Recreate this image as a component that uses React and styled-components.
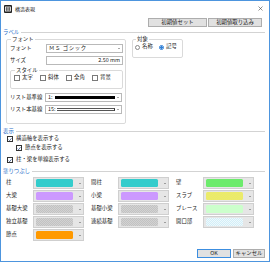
import React from 'react';
import styled, { createGlobalStyle } from 'styled-components';

const Global = createGlobalStyle`
  html, body { margin: 0; padding: 0; background: #fff; }
  body {
    font-family: "Noto Sans CJK JP", "Noto Sans", sans-serif;
    font-size: 5.4px;
    line-height: 1;
    color: #1a1a1a;
  }
  * { box-sizing: border-box; }
`;

const Window = styled.div`
  width: 270px;
  height: 262px;
  border: 1px solid #4d95de;
  background: #fff;
  display: flex;
  flex-direction: column;
`;

const TitleBar = styled.div`
  height: 15px;
  display: flex;
  align-items: center;
  gap: 3px;
  padding: 0 6px 0 3px;
`;

const Title = styled.span`
  font-size: 5px;
  color: #222;
`;

const Close = styled.svg`
  margin-left: auto;
  width: 5px;
  height: 5px;
`;

const Toolbar = styled.div`
  display: flex;
  justify-content: flex-end;
  gap: 1px;
  margin-top: 2px;
  padding-right: 7px;
`;

const Button = styled.button`
  width: ${(p) => p.w}px;
  height: 9px;
  padding: 0;
  font: inherit;
  color: #222;
  background: #e1e1e1;
  border: 1px solid ${(p) => (p.primary ? '#3c8ee0' : '#adadad')};
  display: flex;
  align-items: center;
  justify-content: center;
`;

const SectionHeader = styled.div`
  display: flex;
  align-items: center;
  gap: 2px;
  height: 7px;
  margin-top: ${(p) => p.top}px;
  padding: 0 4px 0 2px;
  color: #2a6fc9;
  &::after {
    content: '';
    flex: 1;
    height: 1px;
    background: #d3d3d3;
  }
`;

const LabelBody = styled.div`
  display: flex;
  align-items: flex-start;
  gap: 6px;
  padding-left: 5px;
`;

const Group = styled.fieldset`
  margin: 0;
  width: ${(p) => p.w}px;
  height: ${(p) => p.h}px;
  border: 1px solid #dadada;
  border-radius: 2px;
  padding: ${(p) => p.pad};
  display: flex;
  flex-direction: column;
  gap: ${(p) => p.gap || 0}px;
`;

const Legend = styled.legend`
  padding: 0 1px;
  margin-left: 1px;
  line-height: 7px;
  color: #222;
`;

const FieldRow = styled.div`
  display: flex;
  align-items: center;
  height: 9px;
  margin-top: ${(p) => p.top || 0}px;
`;

const FieldLabel = styled.span`
  width: ${(p) => p.w || 36}px;
  flex: none;
`;

const Select = styled.div`
  width: 77px;
  height: 9px;
  border: 1px solid #b9b9b9;
  background: #fff;
  display: flex;
  align-items: center;
  gap: 2px;
  padding: 0 2px;
`;

const SelectText = styled.span`
  flex: ${(p) => (p.grow ? 1 : 'none')};
  text-align: ${(p) => (p.right ? 'right' : 'left')};
  letter-spacing: ${(p) => (p.wide ? '0.6px' : '0')};
`;

const Arrow = styled.span`
  margin-left: auto;
  width: 0;
  height: 0;
  border-left: 1.5px solid transparent;
  border-right: 1.5px solid transparent;
  border-top: 1.5px solid #555;
`;

const ThickLine = styled.span`
  flex: 1;
  height: 2.5px;
  background: #000;
`;

const ThinLine = styled.span`
  flex: 1;
  height: 3px;
  border-top: 1px solid #555;
  border-bottom: 1px solid #555;
  border-right: 1px solid #333;
`;

const CheckRow = styled.div`
  display: flex;
  align-items: center;
`;

const CheckItem = styled.label`
  display: flex;
  align-items: center;
  gap: ${(p) => p.gap || 2}px;
  width: ${(p) => (p.w ? p.w + 'px' : 'auto')};
  height: 8px;
  padding-left: ${(p) => p.indent || 0}px;
  margin-top: ${(p) => p.top || 0}px;
`;

const Box = styled.span`
  width: 6px;
  height: 6px;
  flex: none;
  border: 1px solid ${(p) => (p.on ? '#333' : '#7a7a7a')};
  background: #fff;
  display: flex;
  align-items: center;
  justify-content: center;
`;

const Radio = styled.span`
  width: 5px;
  height: 5px;
  flex: none;
  border-radius: 50%;
  border: 1px solid ${(p) => (p.on ? '#2f7fd6' : '#888')};
  background: ${(p) => (p.on ? 'radial-gradient(circle, #2f7fd6 55%, #fff 60%)' : '#fff')};
`;

const DisplayBody = styled.div`
  display: flex;
  flex-direction: column;
  padding-left: 6px;
`;

const FillGrid = styled.div`
  display: grid;
  grid-template-columns: repeat(3, 85px);
  row-gap: 1px;
  margin-top: 2px;
  padding-left: 5px;
`;

const FillItem = styled.div`
  display: flex;
  align-items: center;
  height: 12px;
`;

const FillLabel = styled.span`
  width: 27px;
  flex: none;
`;

const ColorCombo = styled.div`
  width: 51px;
  height: 12px;
  border: 1px solid #cfcfcf;
  background: #e6e6e6;
  display: flex;
  align-items: center;
  padding: 0 2px;
  gap: 3px;
`;

const Swatch = styled.span`
  width: 37px;
  height: 8px;
  border-radius: 1.5px;
  background: ${(p) => p.fill};
  background-size: 2px 2px;
`;

const Footer = styled.div`
  margin-top: auto;
  display: flex;
  justify-content: flex-end;
  gap: 2px;
  padding: 0 4px 3px 0;
`;

const Check = () => (
  <svg width="5" height="5" viewBox="0 0 10 10">
    <path d="M1.5 5.2 L4 7.8 L8.8 2" fill="none" stroke="#1b3f7a" strokeWidth="1.8" />
  </svg>
);

const CheckBox = ({ on, children, ...rest }) => (
  <CheckItem {...rest}>
    <Box on={on}>{on && <Check />}</Box>
    <span>{children}</span>
  </CheckItem>
);

const hatch = (a, b) =>
  `repeating-conic-gradient(${a} 0 25%, ${b} 0 50%)`;

const fills = [
  ['柱', '#33cccc', '間柱', '#33cccc', '壁', '#6ceb6c'],
  ['大梁', '#cc99ff', '小梁', '#cc99ff', 'スラブ', hatch('#f2f25a', '#e4e47a')],
  ['基礎大梁', hatch('#c2c2c2', '#d2d2d2'), '基礎小梁', hatch('#c2c2c2', '#d2d2d2'), 'ブレース', '#ccffcc'],
  ['独立基礎', hatch('#c2c2c2', '#d2d2d2'), '連続基礎', hatch('#c2c2c2', '#d2d2d2'), '開口部', hatch('#d2eef8', '#eef9fc')],
  ['節点', '#ff9900'],
];

const FillCell = ({ label, fill }) => (
  <FillItem>
    <FillLabel>{label}</FillLabel>
    <ColorCombo>
      <Swatch fill={fill} />
      <Arrow />
    </ColorCombo>
  </FillItem>
);

export default function App() {
  return (
    <>
      <Global />
      <Window>
        <TitleBar>
          <svg width="8" height="8" viewBox="0 0 8 8">
            <rect width="8" height="8" rx="1" fill="#222" />
            <rect x="1.5" y="2" width="5" height="4" fill="none" stroke="#fff" strokeWidth="0.8" />
            <path d="M1.5 4 H6.5 M4 2 V6" stroke="#fff" strokeWidth="0.6" />
          </svg>
          <Title>構造表現</Title>
          <Close viewBox="0 0 10 10">
            <path d="M1 1 L9 9 M9 1 L1 9" stroke="#444" strokeWidth="1.2" />
          </Close>
        </TitleBar>

        <Toolbar>
          <Button w={59}>初期値セット</Button>
          <Button w={54}>初期値取り込み</Button>
        </Toolbar>

        <SectionHeader top={2}>ラベル</SectionHeader>
        <LabelBody>
          <Group w={120} h={88} pad="0 2px 0 3px">
            <Legend>フォント</Legend>
            <FieldRow top={1}>
              <FieldLabel>フォント</FieldLabel>
              <Select>
                <SelectText wide>ＭＳ ゴシック</SelectText>
                <Arrow />
              </Select>
            </FieldRow>
            <FieldRow top={3}>
              <FieldLabel>サイズ</FieldLabel>
              <Select>
                <SelectText grow right>2.50 mm</SelectText>
              </Select>
            </FieldRow>
            <Group w={113} h={22} pad="0 0 0 3px" style={{ marginTop: 2 }}>
              <Legend>スタイル</Legend>
              <CheckRow>
                <CheckBox w={26}>太字</CheckBox>
                <CheckBox w={26}>斜体</CheckBox>
                <CheckBox w={26}>全角</CheckBox>
                <CheckBox w={26}>背景</CheckBox>
              </CheckRow>
            </Group>
            <FieldRow top={4}>
              <FieldLabel w={35}>リスト基準線</FieldLabel>
              <Select>
                <SelectText>1:</SelectText>
                <ThickLine />
                <Arrow />
              </Select>
            </FieldRow>
            <FieldRow top={3}>
              <FieldLabel w={35}>リスト本基線</FieldLabel>
              <Select>
                <SelectText>15:</SelectText>
                <ThinLine />
                <Arrow />
              </Select>
            </FieldRow>
          </Group>

          <Group w={51} h={22} pad="0 0 0 2px">
            <Legend>対象</Legend>
            <CheckRow>
              <CheckItem gap={2} w={24}>
                <Radio />
                <span>名称</span>
              </CheckItem>
              <CheckItem gap={2}>
                <Radio on />
                <span>記号</span>
              </CheckItem>
            </CheckRow>
          </Group>
        </LabelBody>

        <SectionHeader top={4}>表示</SectionHeader>
        <DisplayBody>
          <CheckBox on gap={3}>構造軸を表示する</CheckBox>
          <CheckBox on gap={3} indent={9} top={1}>節点を表示する</CheckBox>
          <CheckBox on gap={3} top={4}>柱・梁を単線表示する</CheckBox>
        </DisplayBody>

        <SectionHeader top={4}>塗りつぶし</SectionHeader>
        <FillGrid>
          {fills.map((row) =>
            [0, 2, 4].map((i) =>
              row[i] ? <FillCell key={row[i]} label={row[i]} fill={row[i + 1]} /> : <span key={row[0] + i} />
            )
          )}
        </FillGrid>

        <Footer>
          <Button w={34} primary>OK</Button>
          <Button w={32}>キャンセル</Button>
        </Footer>
      </Window>
    </>
  );
}
